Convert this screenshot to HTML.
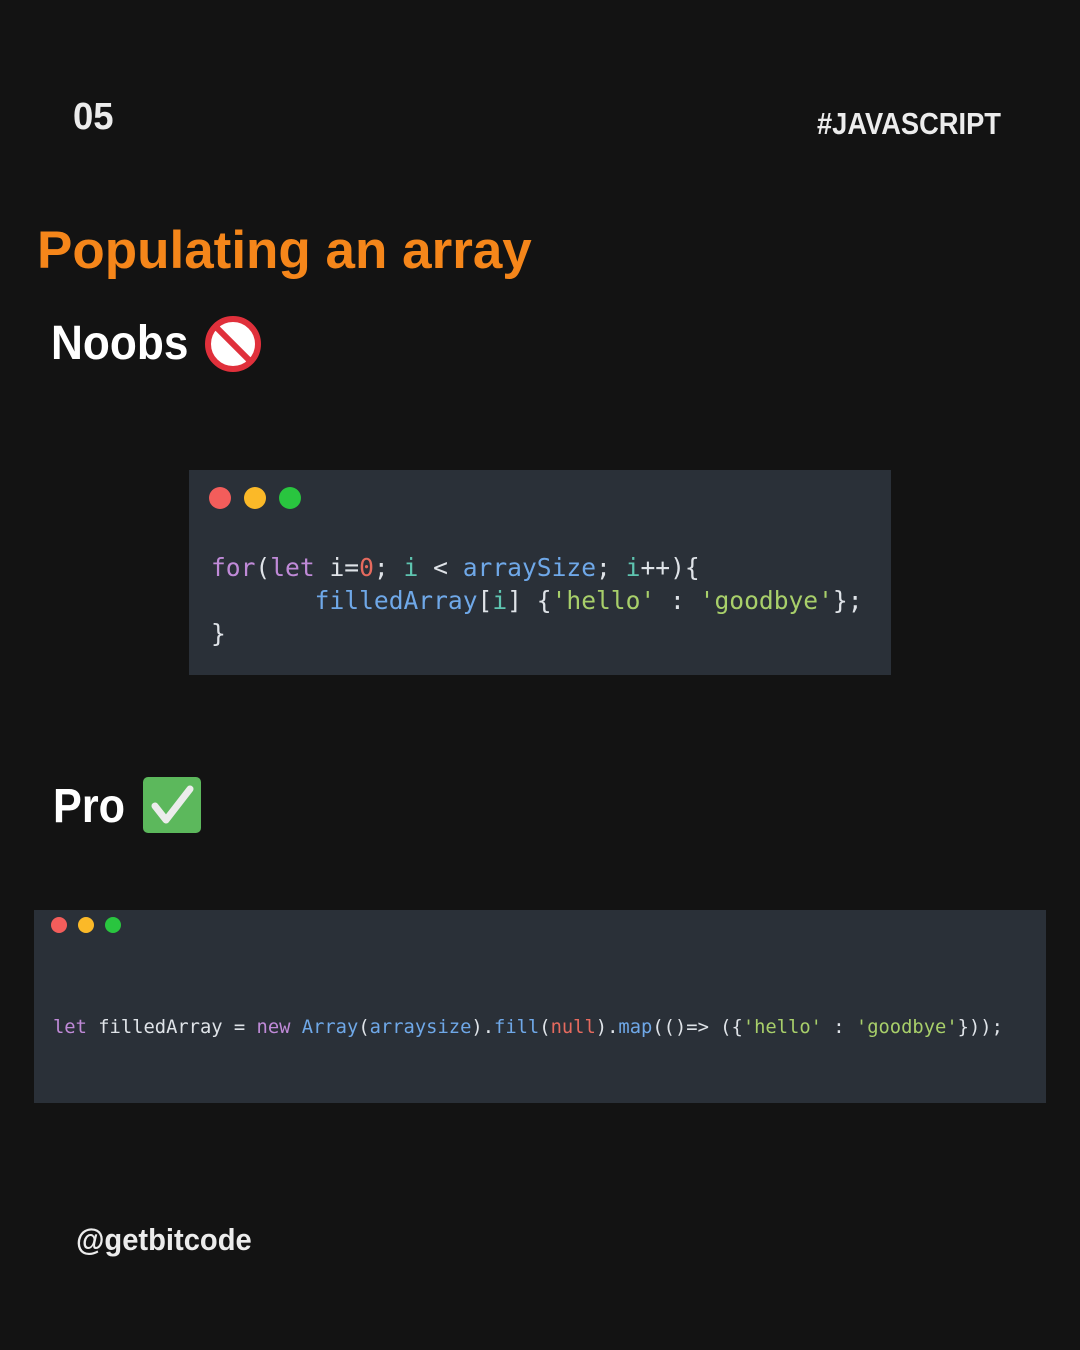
<!DOCTYPE html>
<html><head><meta charset="utf-8">
<style>
html,body{margin:0;padding:0}
body{width:1080px;height:1350px;background:#131313;position:relative;overflow:hidden;font-family:"Liberation Sans",sans-serif}
.abs{position:absolute;white-space:nowrap}
.num{left:73px;top:96px;font-size:38px;font-weight:bold;color:#ececec;transform:scaleX(0.96);transform-origin:left}
.tag{left:817px;top:106px;font-size:31px;font-weight:bold;color:#ececec;transform:scaleX(0.88);transform-origin:left}
.title{left:37px;top:220px;font-size:53px;font-weight:bold;color:#f5861a;transform:scaleX(1.0);transform-origin:left}
.h{font-size:48px;font-weight:bold;color:#fff;transform:scaleX(0.9);transform-origin:left}
.box{position:absolute;background:#2a3038}
.dot{position:absolute;border-radius:50%}
.code{position:absolute;font-family:"DejaVu Sans Mono","Liberation Mono",monospace;white-space:pre;color:#dfe3e8}
.k{color:#c08ad8}.b{color:#6fa8e8}.c{color:#5ec4b0}.s{color:#a8cf6a}.n{color:#e66a5e}.w{color:#dfe3e8}
.handle{left:76px;top:1222px;font-size:31px;font-weight:bold;color:#ececec;transform:scaleX(0.94);transform-origin:left}
</style></head><body>
<div class="abs num">05</div>
<div class="abs tag">#JAVASCRIPT</div>
<div class="abs title">Populating an array</div>
<div class="abs h" style="left:51px;top:316px;transform:scaleX(0.92)">Noobs</div>
<svg class="abs" style="left:203px;top:314px" width="60" height="60" viewBox="0 0 60 60">
<circle cx="30" cy="30" r="25" fill="#fff" stroke="#e0303b" stroke-width="6"/>
<line x1="13" y1="13" x2="47" y2="47" stroke="#e0303b" stroke-width="6"/>
</svg>
<div class="box" style="left:189px;top:470px;width:702px;height:205px"></div>
<div class="dot" style="left:209px;top:487px;width:22px;height:22px;background:#f35d5b"></div>
<div class="dot" style="left:244px;top:487px;width:22px;height:22px;background:#fbb928"></div>
<div class="dot" style="left:279px;top:487px;width:22px;height:22px;background:#29c53f"></div>
<div class="code" style="left:211px;top:551px;font-size:24.6px;line-height:33px"><span class="k">for</span>(<span class="k">let</span> i=<span class="n">0</span>; <span class="c">i</span> &lt; <span class="b">arraySize</span>; <span class="c">i</span>++){
       <span class="b">filledArray</span>[<span class="c">i</span>] {<span class="s">'hello'</span> : <span class="s">'goodbye'</span>};
}</div>
<div class="abs h" style="left:53px;top:779px">Pro</div>
<svg class="abs" style="left:142px;top:776px" width="60" height="58" viewBox="0 0 60 58">
<rect x="1" y="1" width="58" height="56" rx="5" fill="#5cb85c"/>
<path d="M13 30 L24 44 L48 13" fill="none" stroke="#ececec" stroke-width="7" stroke-linecap="round" stroke-linejoin="round"/>
</svg>
<div class="box" style="left:34px;top:910px;width:1012px;height:193px"></div>
<div class="dot" style="left:51px;top:917px;width:16px;height:16px;background:#f35d5b"></div>
<div class="dot" style="left:78px;top:917px;width:16px;height:16px;background:#fbb928"></div>
<div class="dot" style="left:105px;top:917px;width:16px;height:16px;background:#29c53f"></div>
<div class="code" style="left:53px;top:1016px;font-size:18.8px;line-height:24px"><span class="k">let</span> filledArray = <span class="k">new</span> <span class="b">Array</span>(<span class="b">arraysize</span>).<span class="b">fill</span>(<span class="n">null</span>).<span class="b">map</span>(()=&gt; ({<span class="s">'hello'</span> : <span class="s">'goodbye'</span>}));</div>
<div class="abs handle">@getbitcode</div>
</body></html>
